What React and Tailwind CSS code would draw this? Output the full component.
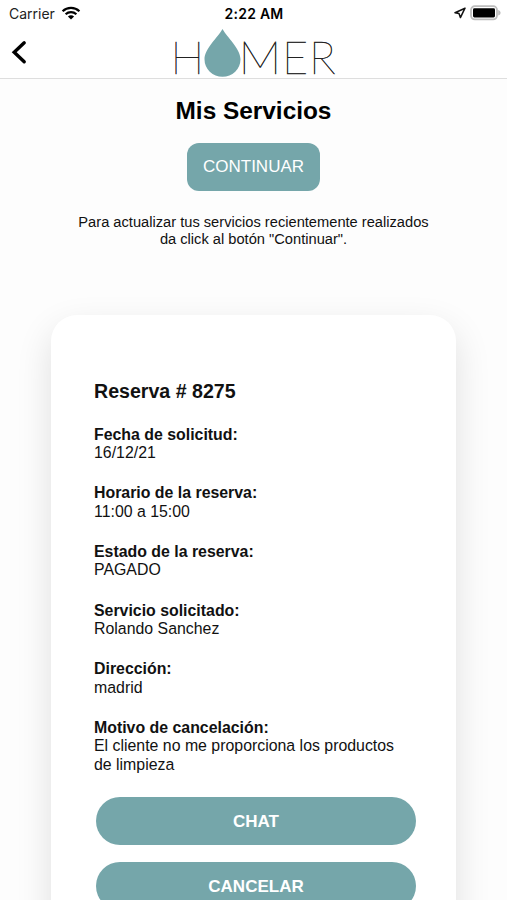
import React from 'react';

const details = [
  { label: 'Fecha de solicitud:', value: '16/12/21' },
  { label: 'Horario de la reserva:', value: '11:00 a 15:00' },
  { label: 'Estado de la reserva:', value: 'PAGADO' },
  { label: 'Servicio solicitado:', value: 'Rolando Sanchez' },
  { label: 'Dirección:', value: 'madrid' },
  { label: 'Motivo de cancelación:', value: 'El cliente no me proporciona los productos de limpieza' },
];

function WifiIcon() {
  return (
    <svg width="20" height="14" viewBox="0 0 20 14" className="-mt-[2px]" fill="none" stroke="#000" strokeWidth="2.2">
      <path d="M1.6 5.2C6.3 .7 13.7 .7 18.4 5.2" />
      <path d="M4.6 8.3C7.7 5.4 12.3 5.4 15.4 8.3" />
      <path d="M10 13.6L6.9 10.5C8.6 8.9 11.4 8.9 13.1 10.5Z" fill="#000" stroke="none" />
    </svg>
  );
}

function LocationIcon() {
  return (
    <svg width="12" height="12" viewBox="0 0 12 12" className="-mt-[1px]" fill="none" stroke="#111" strokeWidth="1.5" strokeLinejoin="round">
      <path d="M11 1.2L1 5.7L5 6.6L6.4 10.6Z" />
    </svg>
  );
}

function BatteryIcon() {
  return (
    <svg width="32" height="16" viewBox="0 0 32 16" className="-mt-[1px]">
      <rect x="1" y="1.2" width="26" height="13.2" rx="3.8" fill="#fff" stroke="#bdbdbd" strokeWidth="1.8" />
      <rect x="3" y="3.2" width="22" height="9.2" rx="1.4" fill="#000" />
      <path d="M28.2 5C31.4 6.2 31.4 9.4 28.2 10.6Z" fill="#bdbdbd" />
    </svg>
  );
}

// wordmark with a water drop in place of the O
function Logo() {
  return (
    <svg width="176" height="58" viewBox="-6 0 176 58" className="overflow-visible" role="img" aria-label="Homer">
      <g className="font-['Lato',sans-serif] font-thin text-[45px]" fill="#222" stroke="#222" strokeWidth="0.45">
        <text x="-2.5" y="46">H</text>
        <text transform="translate(65.5 46) scale(1.07 1)">M</text>
        <text x="109" y="46">E</text>
        <text x="136" y="46">R</text>
      </g>
      <path d="M49.5 1C54 9 67.5 21 67.5 31.2A18 17.6 0 0 1 31.5 31.2C31.5 21 45 9 49.5 1Z" fill="#75a6aa" />
    </svg>
  );
}

function StatusBar() {
  return (
    <div className="grid h-[27px] grid-cols-3 items-center pl-[9px] pr-[5px] font-['Inter',sans-serif] text-[14px] text-[#222]">
      <div className="flex items-center gap-[6px]">
        <span>Carrier</span>
        <WifiIcon />
      </div>
      <span className="pr-[3px] text-center font-semibold tracking-[0.25px] text-black">2:22 AM</span>
      <div className="flex items-center justify-end gap-[4px]">
        <LocationIcon />
        <BatteryIcon />
      </div>
    </div>
  );
}

function Header() {
  return (
    <header className="h-[79px] border-b border-[#dedede] bg-white">
      <StatusBar />
      <div className="flex h-[51px] items-start">
        <button className="mt-[12px] ml-[10px] w-[18px]" aria-label="Volver">
          <svg width="18" height="26" viewBox="0 0 18 26" fill="none" stroke="#000" strokeWidth="3.4" strokeLinecap="round">
            <path d="M14.2 3.8L4.2 13.2L14.2 22.8" />
          </svg>
        </button>
        <div className="mt-[1px] ml-[139px]">
          <Logo />
        </div>
      </div>
    </header>
  );
}

export default function App() {
  return (
    <div className="h-[900px] w-full overflow-hidden bg-[#fdfdfd] font-['Liberation_Sans',Arial,sans-serif] text-[#111]">
      <Header />

      <main className="flex flex-col items-center">
        <h1 className="mt-[17px] text-[24.4px] leading-[30px] font-bold text-black">Mis Servicios</h1>
        <button className="mt-[17px] h-[48px] w-[133px] rounded-[12px] bg-[#75a6aa] text-[17px] text-white">CONTINUAR</button>
        <p className="mt-[23px] w-[380px] text-center text-[14.67px] leading-[17px]">
          Para actualizar tus servicios recientemente realizados
          <br />
          da click al botón "Continuar".
        </p>

        <section className="mt-[67px] h-[700px] w-[405px] rounded-[26px] bg-white pr-[40px] pl-[43px] pt-[64px] shadow-[0_14px_36px_rgba(0,0,0,0.12)]">
          <h2 className="text-[19.6px] leading-[24px] font-bold">Reserva # 8275</h2>
          <dl className="mt-[22.6px] flex flex-col gap-[22px] text-[15.88px] leading-[18.33px]">
            {details.map((item) => (
              <div key={item.label}>
                <dt className="font-bold">{item.label}</dt>
                <dd className="max-w-[316px]">{item.value}</dd>
              </div>
            ))}
          </dl>
          <div className="mt-[23.4px] ml-[2px] flex flex-col gap-[17px]">
            <button className="h-[48px] rounded-full bg-[#75a6aa] text-[17px] font-bold text-white">CHAT</button>
            <button className="h-[48px] rounded-full bg-[#75a6aa] text-[17px] font-bold text-white">CANCELAR</button>
          </div>
        </section>
      </main>
    </div>
  );
}
